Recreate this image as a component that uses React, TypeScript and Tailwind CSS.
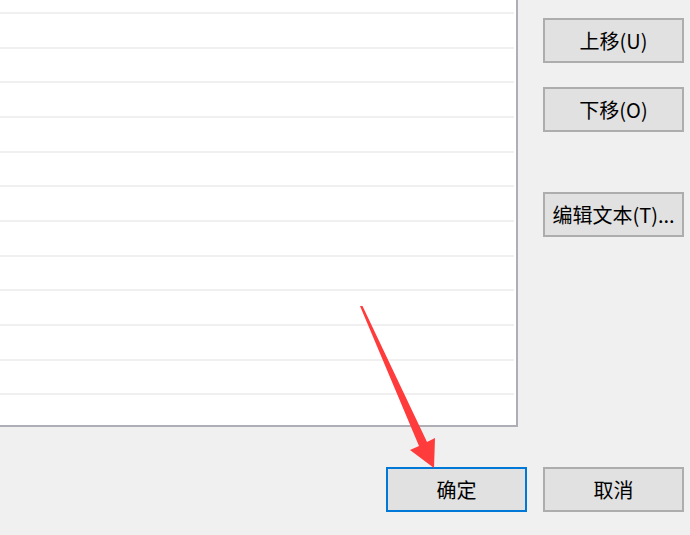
import React from "react";

const font = { fontFamily: '"Noto Sans CJK SC", "Noto Sans", sans-serif' };

function Btn({ label, focused = false }: { label: string; focused?: boolean }) {
  return (
    <div
      className={
        "flex h-[45px] w-[141px] items-center justify-center bg-[#e1e1e1] text-[20px] leading-none text-[#000000] " +
        (focused ? "border-2 border-[#0078d7]" : "border-2 border-[#adadad]")
      }
      style={font}
    >
      {label}
    </div>
  );
}

export default function App() {
  const rows = Array.from({ length: 11 });
  return (
    <div className="relative h-[535px] w-[690px] overflow-hidden bg-[#f0f0f0]">
      <div className="flex">
        <div className="flex h-[427px] w-[518px] flex-col border-b-2 border-r-2 border-[#aeaeb6] bg-white pr-[2px]">
          <div className="h-[14px] shrink-0 border-b-2 border-[#f0f0f0]" />
          {rows.map((_, i) => (
            <div key={i} className="h-[34.67px] shrink-0 border-b-2 border-[#f0f0f0]" />
          ))}
        </div>
        <div className="ml-[25px] flex flex-col pt-[18px]">
          <Btn label="上移(U)" />
          <div className="h-[24px]" />
          <Btn label="下移(O)" />
          <div className="h-[60px]" />
          <Btn label="编辑文本(T)..." />
        </div>
      </div>
      <div className="mt-[40px] flex justify-end gap-[16px] pr-[6px]">
        <Btn label="确定" focused />
        <Btn label="取消" />
      </div>
      <svg className="pointer-events-none absolute left-0 top-0" width="690" height="535">
        <polygon
          points="360,306 362.5,306 427,442 435,438 434,468 410,450 419,446"
          fill="#ff3b3b"
        />
      </svg>
    </div>
  );
}
